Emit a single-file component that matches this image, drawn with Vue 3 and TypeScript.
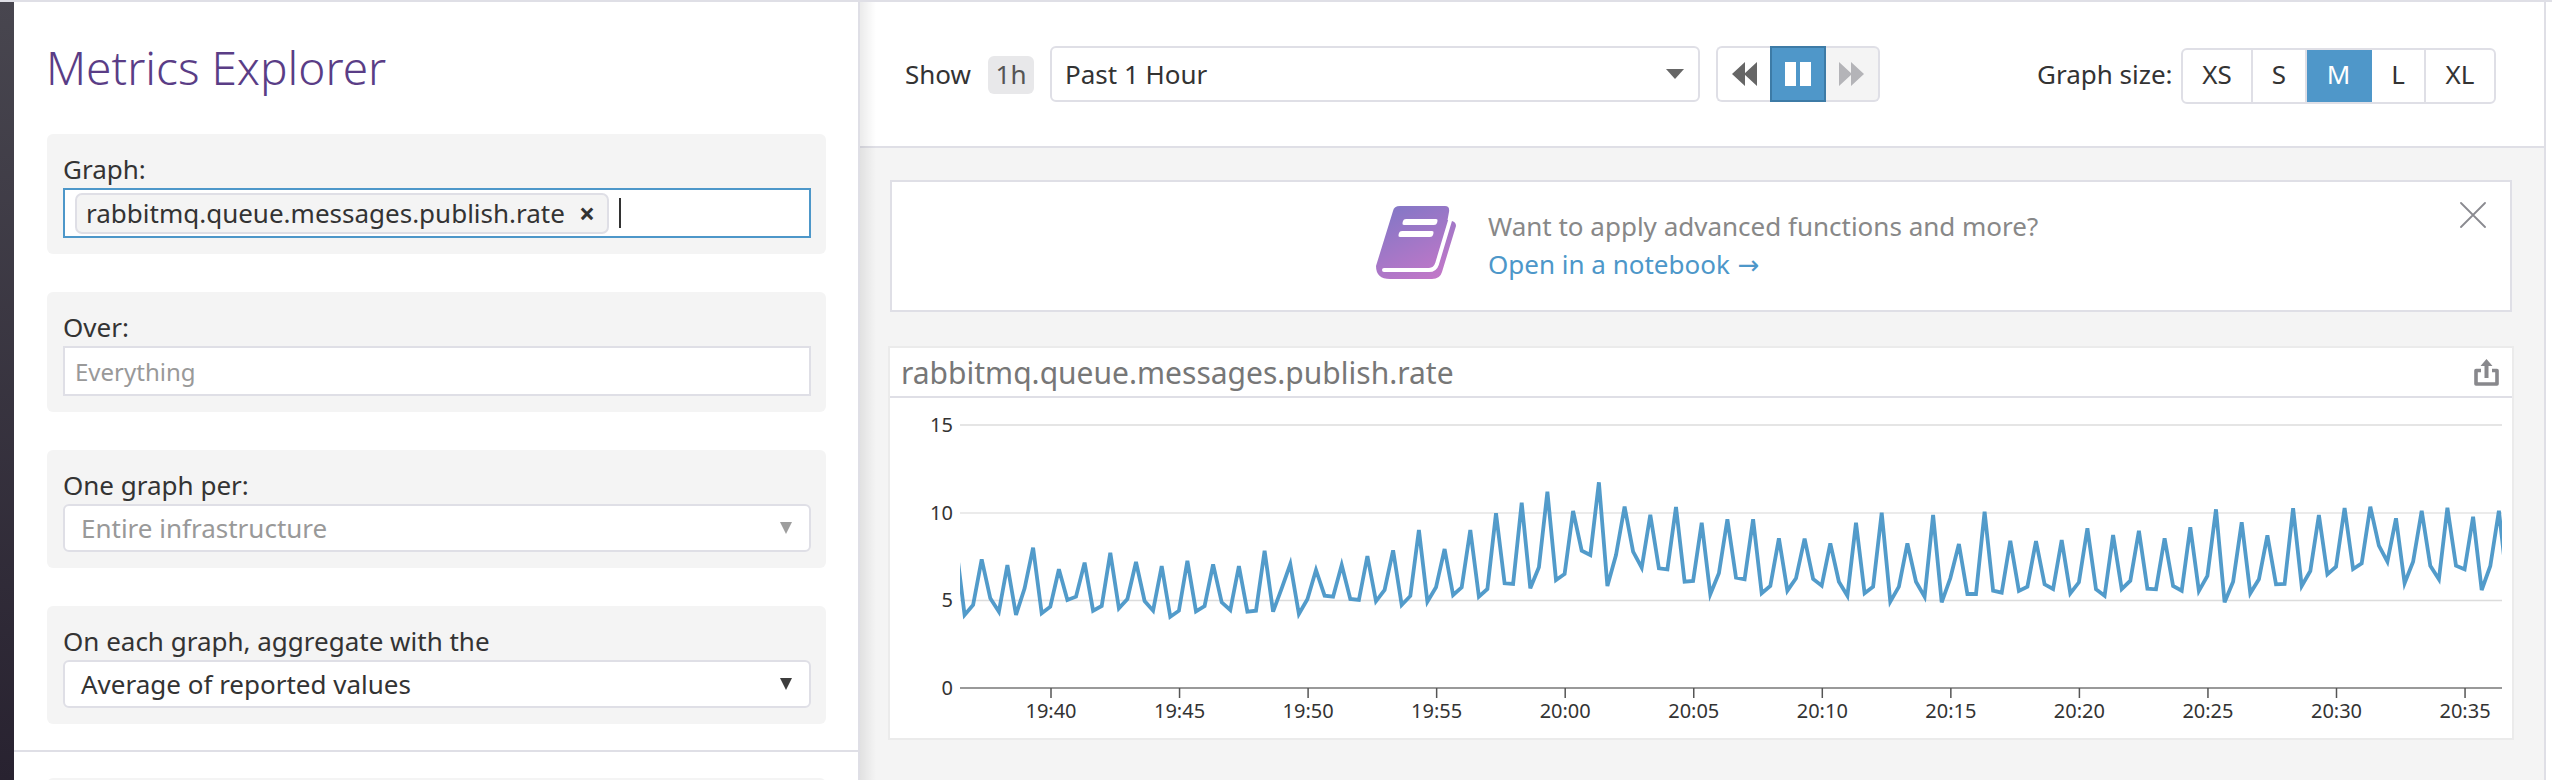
<script setup lang="ts">
const zoomA = [435,645,615,478,595,635,495,645,565,443,640,620,508,600,590,488,632,618,458,625,597,486,603,632,498,650,632,482,634,618,493,607,630,498,635,632,452,635,565,492,642,598,510,587,590,495,597,600,468,604,570,451,615,588,390,605,562]
const zoomB = [447,585,562,390,590,567,340,550,552,308,565,502,275,540,522,333,452,465,247,558,465,320,455,503,344,505,508,321,545,543,368,583,520,358,533,538,358,580,558,415,572,535,416,537,557,430,545,587,368,580,560,338,605,560,430,545,590,345,607,535,432,582,582,335,572]
const zoomC = [578,422,573,560,423,553,567,420,580,547,385,568,587,405,567,542,392,566,568,415,558,572,382,573,528,328,607,545,367,580,538,406,553,552,325,558,513,345,523,500,324,507,490,320,437,485,355,550,485,332,497,538,323,497,508,350,570,498,332,560]
const series: number[] = [...zoomA, ...zoomB, ...zoomC]
const startX = 956
const step = 8.5714
const points: string = series.map((z, i) => `${(startX + i * step).toFixed(1)},${(400 + z / 3).toFixed(1)}`).join(' ')
const ticks = ['19:40','19:45','19:50','19:55','20:00','20:05','20:10','20:15','20:20','20:25','20:30','20:35'].map((label, i) => ({ label, x: 1051 + i * 128.55 }))
const yLabels = [{ t: '15', y: 432 }, { t: '10', y: 520 }, { t: '5', y: 607 }, { t: '0', y: 695 }]
const sizes = ['XS', 'S', 'M', 'L', 'XL']
</script>

<template>
  <div class="page">
    <aside class="rail"></aside>
    <section class="left">
      <h1 class="title">Metrics Explorer</h1>
      <div class="field first">
        <label>Graph:</label>
        <div class="tagbox">
          <span class="chip">rabbitmq.queue.messages.publish.rate<b class="chipx">×</b></span>
          <span class="caret"></span>
        </div>
      </div>
      <div class="field first">
        <label>Over:</label>
        <div class="plain">Everything</div>
      </div>
      <div class="field">
        <label>One graph per:</label>
        <div class="sel muted">Entire infrastructure<i class="tri"></i></div>
      </div>
      <div class="field">
        <label>On each graph, aggregate with the</label>
        <div class="sel">Average of reported values<i class="tri"></i></div>
      </div>
      <div class="rule"></div>
      <div class="field cut"></div>
    </section>
    <section class="right">
      <header class="bar">
        <span class="show">Show</span>
        <span class="badge">1h</span>
        <div class="range">Past 1 Hour<i class="rtri"></i></div>
        <div class="player">
          <button class="pb"><svg width="26" height="24" viewBox="0 0 26 24"><path d="M14 0v24L1 12zM26 0v24L13 12z" fill="#666"/></svg></button>
          <button class="pb active"><svg width="26" height="24" viewBox="0 0 26 24"><path d="M0 0h11v24H0zM15 0h11v24H15z" fill="#fff"/></svg></button>
          <button class="pb off"><svg width="26" height="24" viewBox="0 0 26 24"><path d="M0 0l13 12L0 24zM12 0l13 12-13 12z" fill="#b4b4b8"/></svg></button>
        </div>
        <span class="gs">Graph size:</span>
        <div class="sizes">
          <span v-for="s in sizes" :key="s" class="sz" :class="['sz-' + s, { on: s === 'M' }]">{{ s }}</span>
        </div>
      </header>
      <div class="content">
        <div class="banner">
          <svg class="book" width="80" height="74" viewBox="0 0 80 74">
            <defs>
              <linearGradient id="bk" gradientUnits="userSpaceOnUse" x1="22" y1="0" x2="58" y2="74">
                <stop offset="0" stop-color="#8577c6"/>
                <stop offset="1" stop-color="#c277c8"/>
              </linearGradient>
            </defs>
            <path fill="url(#bk)" d="M24 0H69Q74 0 73 6L71.500 14 76 15Q80 16 80 20L66 66Q64 73 56 73H14Q0 73 0 60L17 5Q18 0 24 0Z"/>
            <path d="M76 8L61 58Q59 64 53 64H8" fill="none" stroke="#fff" stroke-width="4" stroke-linecap="round"/>
            <path fill="#fff" d="M30 13H60Q62 13 61.500 15L61 17Q60.500 19 58 19H28Q26 19 26.500 17L27 15Q27.500 13 30 13ZM26 25H56Q58 25 57.500 27L57 29Q56.500 31 54 31H24Q22 31 22.500 29L23 27Q23.500 25 26 25Z"/>
          </svg>
          <div class="btext">
            <div class="want">Want to apply advanced functions and more?</div>
            <div class="open">Open in a notebook <span class="arrow">→</span></div>
          </div>
          <svg class="close" width="26" height="26" viewBox="0 0 26 26"><path d="M1 1L25 25M25 1L1 25" stroke="#8a8a90" stroke-width="1.800" fill="none" stroke-linecap="round"/></svg>
        </div>
        <div class="card">
          <div class="chead">
            <span class="ctitle">rabbitmq.queue.messages.publish.rate</span>
            <svg class="share" width="25" height="27" viewBox="0 0 25 27"><path d="M12.500 0l6 7h-4v12h-4V7h-4z" fill="#88888c"/><path d="M7 11.500H2v13.500h21V11.500h-5" fill="none" stroke="#88888c" stroke-width="3.600" stroke-linejoin="round"/></svg>
          </div>
          <svg class="plot" width="1622" height="340" viewBox="890 398 1622 340">
            <defs><clipPath id="pc"><rect x="960" y="400" width="1542" height="300"/></clipPath></defs>
            <line x1="960" x2="2502" y1="425" y2="425" stroke="#dcdcdc" stroke-width="1.5"/>
            <line x1="960" x2="2502" y1="513" y2="513" stroke="#ebebeb" stroke-width="2"/>
            <line x1="960" x2="2502" y1="600.5" y2="600.5" stroke="#dcdcdc" stroke-width="1.5"/>
            <line x1="960" x2="2502" y1="688" y2="688" stroke="#777" stroke-width="1.5"/>
            <polyline :points="points" clip-path="url(#pc)" fill="none" stroke="#4393c6" stroke-opacity="0.92" stroke-width="3.800" stroke-linejoin="miter" stroke-miterlimit="4"/>
            <g v-for="t in ticks" :key="t.label">
              <line :x1="t.x" :x2="t.x" y1="688" y2="698" stroke="#555" stroke-width="1.5"/>
              <text :x="t.x" y="718" text-anchor="middle" class="axis">{{ t.label }}</text>
            </g>
            <text v-for="l in yLabels" :key="l.t" x="953" :y="l.y" text-anchor="end" class="axis">{{ l.t }}</text>
          </svg>
        </div>
      </div>
    </section>
    <aside class="edge"></aside>
  </div>
</template>

<style>
html, body { margin: 0; padding: 0; background: #fff; overflow: hidden; }
</style>

<style scoped>
.page { width: 2552px; height: 780px; display: flex; overflow: hidden; border-top: 2px solid #dfdfe6; box-sizing: border-box; font-family: "Noto Sans", "Open Sans", sans-serif; color: #333; font-size: 26px; background: #fff; }
.rail { width: 14px; flex: none; background: linear-gradient(#48464f, #282230); }
.left { width: 846px; flex: none; box-sizing: border-box; border-right: 2px solid #dfdfe6; padding-left: 33px; padding-right: 32px; display: flex; flex-direction: column; }
.left > * { flex: none; }
.title { margin: 0 0 0 -1px; height: 132px; box-sizing: border-box; padding-top: 33px; font-size: 46px; line-height: 64px; font-weight: 300; color: #5a3d86; white-space: nowrap; }
.field { background: #f4f4f4; border-radius: 6px; height: 118px; padding: 16px 16px 0; box-sizing: border-box; margin-bottom: 38px; width: 779px; }
.field.first { height: 120px; }
.field.cut { margin: 26px 0 0; }
.field label { display: block; font-size: 26px; line-height: 38px; height: 38px; color: #333; white-space: nowrap; }
.tagbox { height: 50px; width: 748px; box-sizing: border-box; border: 2px solid #4d97c9; background: #fff; display: flex; align-items: center; padding-left: 10px; }
.chip { height: 41px; width: 534px; box-sizing: border-box; border: 2px solid #dfdfe6; background: #f4f4f4; border-radius: 7px; display: flex; align-items: center; padding-left: 9px; font-size: 26px; white-space: nowrap; }
.chipx { margin-left: 14px; font-size: 28px; }
.caret { width: 2px; height: 30px; background: #333; margin-left: 10px; }
.plain { height: 50px; width: 748px; box-sizing: border-box; border: 2px solid #dfdfe6; background: #fff; display: flex; align-items: center; padding-left: 10px; font-size: 24px; color: #999; }
.sel { height: 48px; width: 748px; box-sizing: border-box; border: 2px solid #dfdfe6; border-radius: 6px; background: #fff; display: flex; align-items: center; justify-content: space-between; padding: 0 17px 0 16px; font-size: 26px; color: #333; }
.sel.muted { color: #999; }
.tri { width: 0; height: 0; border-left: 6.5px solid transparent; border-right: 6.5px solid transparent; border-top: 12px solid currentColor; opacity: .95; }
.rule { height: 2px; background: #dfdfe6; margin: -12px -32px 0 -33px; }
.right { flex: 1; min-width: 0; display: flex; flex-direction: column; position: relative; border-right: 2px solid #dfdfe6; background: #f4f4f4; }
.right::before { content: ""; position: absolute; left: 0; top: 0; bottom: 0; width: 16px; background: linear-gradient(90deg, rgba(0,0,0,.08), rgba(0,0,0,0)); pointer-events: none; z-index: 2; }
.edge { width: 6px; flex: none; background: #fff; }
.bar { height: 146px; flex: none; box-sizing: border-box; background: #fff; border-bottom: 2px solid #dfdfe6; display: flex; align-items: flex-start; padding: 44px 0 0 45px; }
.show { margin-top: 12px; line-height: 32px; width: 83px; font-size: 26px; }
.badge { margin-top: 10px; width: 46px; height: 38px; line-height: 36px; background: #e8e8ea; border-radius: 6px; text-align: center; color: #555; font-size: 26px; }
.range { margin-left: 16px; width: 650px; height: 56px; box-sizing: border-box; border: 2px solid #dfdfe6; border-radius: 6px; display: flex; align-items: center; justify-content: space-between; padding: 0 14px 0 13px; font-size: 26px; }
.rtri { width: 0; height: 0; border-left: 9.5px solid transparent; border-right: 9.5px solid transparent; border-top: 10px solid #666; }
.player { margin-left: 16px; width: 164px; height: 56px; display: flex; }
.pb { height: 56px; border: 2px solid #dfdfe6; background: #fff; padding: 0; display: flex; align-items: center; justify-content: center; box-sizing: border-box; }
.pb:first-child { width: 54px; border-radius: 6px 0 0 6px; border-right: 0; }
.pb.active { width: 56px; background: #4f97c9; border-color: #3d7ba6; }
.pb.off { width: 54px; background: #f4f4f4; border-left: 0; border-radius: 0 6px 6px 0; }
.gs { margin-left: 157px; margin-top: 12px; line-height: 32px; width: 144px; white-space: nowrap; font-size: 26px; }
.sizes { height: 56px; width: 315px; margin-top: 2px; box-sizing: border-box; border: 2px solid #dfdfe6; border-radius: 6px; display: flex; overflow: hidden; }
.sz { display: flex; align-items: center; justify-content: center; font-size: 26px; padding-bottom: 4px; border-right: 2px solid #dfdfe6; box-sizing: border-box; }
.sz:last-child { border-right: 0; flex: 1; }
.sz-XS { width: 70px; } .sz-S { width: 54px; } .sz-M { width: 65px; } .sz-L { width: 54px; }
.sz.on { background: #4f97c9; color: #fff; border-right-color: #4f97c9; }
.content { flex: 1; padding: 32px 32px 0 30px; }
.banner { height: 132px; box-sizing: border-box; border: 2px solid #dfdfe6; background: #fff; display: flex; align-items: center; padding-left: 484px; position: relative; width: 1622px; }
.book { margin-top: -7px; }
.btext { margin-left: 32px; font-size: 26px; line-height: 38px; margin-top: -2px; }
.want { color: #888; white-space: nowrap; }
.open { color: #4d97c9; white-space: nowrap; }
.arrow { font-family: "DejaVu Sans", sans-serif; font-size: 26px; margin-left: 1px; }
.close { position: absolute; right: 24px; top: 20px; }
.card { margin-top: 34px; width: 1626px; margin-left: -2px; height: 394px; box-sizing: border-box; border: 2px solid #ebebeb; background: #fff; }
.chead { height: 50px; box-sizing: border-box; border-bottom: 2px solid #dfdfe6; display: flex; align-items: center; justify-content: space-between; padding: 0 13px 0 11px; }
.ctitle { font-size: 30px; color: #777; white-space: nowrap; }
.plot { display: block; }
.axis { font-size: 20px; fill: #333; font-family: "Noto Sans", sans-serif; }
</style>
